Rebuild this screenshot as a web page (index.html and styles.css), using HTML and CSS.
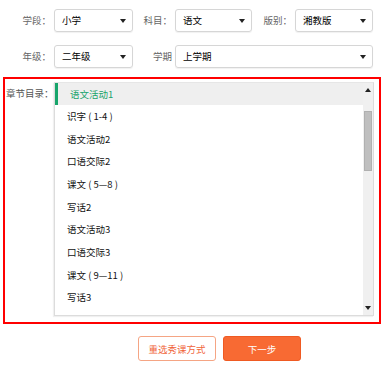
FILE: index.html
```html
<!DOCTYPE html>
<html>
<head>
<meta charset="utf-8">
<link rel="stylesheet" href="styles.css">
</head>
<body>
<div class="filters">
  <div class="row">
    <span class="lbl w50">学段：</span><div class="sel w79">小学<i class="arr"></i></div>
    <span class="lbl w37">科目：</span><div class="sel w77">语文<i class="arr"></i></div>
    <span class="lbl w38">版别：</span><div class="sel w78">湘教版<i class="arr"></i></div>
  </div>
  <div class="row">
    <span class="lbl w50">年级：</span><div class="sel w79">二年级<i class="arr"></i></div>
    <span class="lbl w37">学期</span><div class="sel w198">上学期<i class="arr"></i></div>
  </div>
</div>
<div class="chapter">
  <span class="clbl">章节目录：</span>
  <div class="listbox">
    <ul class="items">
      <li class="on">语文活动1</li>
      <li>识字 ( 1-4 )</li>
      <li>语文活动2</li>
      <li>口语交际2</li>
      <li>课文 ( 5—8 )</li>
      <li>写话2</li>
      <li>语文活动3</li>
      <li>口语交际3</li>
      <li>课文 ( 9—11 )</li>
      <li>写话3</li>
    </ul>
    <div class="sbar">
      <div class="sbtn"><i class="up"></i></div>
      <div class="thumb"></div>
      <div class="strack"></div>
      <div class="sbtn"><i class="down"></i></div>
    </div>
  </div>
</div>
<div class="actions">
  <button class="btn ghost">重选秀课方式</button>
  <button class="btn primary">下一步</button>
</div>
</body>
</html>
```
FILE: styles.css
```css
* { box-sizing: border-box; }
body {
  margin: 0;
  font-family: "Noto Sans CJK SC", "Microsoft YaHei", sans-serif;
  font-size: 9.5px;
  color: #222;
  background: #fff;
}
.filters { padding-top: 9px; }
.row { display: flex; align-items: center; height: 23px; margin-bottom: 13px; }
.row:last-child { margin-bottom: 0; }
.lbl { text-align: right; color: #666; padding-right: 3px; line-height: 23px; white-space: nowrap; }
.w50 { width: 54px; }
.w37 { width: 42px; }
.w38 { width: 43px; }
.sel {
  position: relative;
  height: 23px;
  line-height: 21px;
  border: 1px solid #d6d6d6;
  border-radius: 3px;
  padding-left: 7px;
  color: #000;
  box-shadow: 0 1px 1px rgba(0,0,0,0.06);
}
.w79 { width: 79px; }
.w77 { width: 77px; }
.w78 { width: 78px; }
.w198 { width: 198px; }
.arr {
  position: absolute;
  right: 6px;
  top: 9px;
  width: 0; height: 0;
  border-left: 3px solid transparent;
  border-right: 3px solid transparent;
  border-top: 4px solid #222;
}
.chapter {
  display: flex;
  margin: 9px 0 0 3px;
  width: 378px;
  height: 247px;
  border: 2px solid #f00;
  padding: 3px 5px 6px 0;
}
.clbl { width: 49px; color: #555; line-height: 22px; padding-left: 1px; white-space: nowrap; }
.listbox {
  flex: 1;
  display: flex;
  border: 1px solid #dcdcdc;
  border-top-color: #e6e6e6;
  box-shadow: -1px 1px 1px rgba(0,0,0,0.06);
  overflow: hidden;
}
.items { list-style: none; margin: 0; padding: 0; flex: 1; }
.items li { height: 22.67px; line-height: 22.67px; padding-left: 12px; color: #111; white-space: pre; }
.items li.on {
  height: 22px;
  line-height: 22px;
  background: #efefef;
  border-left: 3px solid #17a56b;
  padding-left: 12px;
  color: #18a46b;
}
.sbar { width: 10px; background: #f0f0f0; display: flex; flex-direction: column; }
.sbtn { height: 28px; position: relative; }
.sbtn:last-child { height: 12px; }
.up, .down {
  position: absolute; left: 2px; width: 0; height: 0;
  border-left: 3px solid transparent; border-right: 3px solid transparent;
}
.up { top: 5px; border-bottom: 4px solid #222; }
.down { top: 3px; border-top: 4px solid #222; }
.thumb { height: 60px; background: #bfbfbf; margin: 0 1px; border: 1px solid #b0b0b0; }
.strack { flex: 1; }
.actions { display: flex; gap: 7px; margin: 12px 0 0 138px; }
.btn {
  width: 78px; height: 25px;
  font: inherit;
  border-radius: 3px;
  padding: 0;
}
.ghost { background: #fff; border: 1px solid #f5a584; color: #f0643a; }
.primary { background: #f86a33; border: 1px solid #ef5a22; color: #fff; }
```
